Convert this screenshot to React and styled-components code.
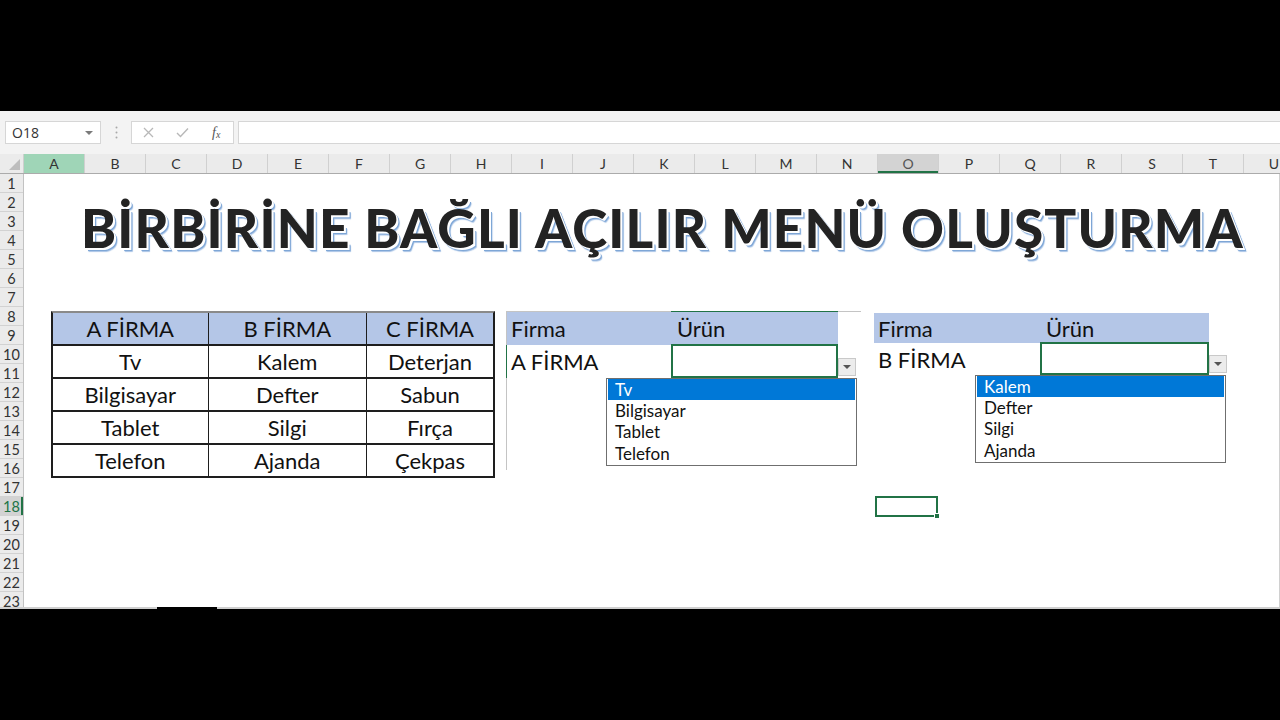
import React from "react";
import styled, { createGlobalStyle } from "styled-components";

const GlobalStyle = createGlobalStyle`
  html, body { margin: 0; padding: 0; background: #000; }
  body { font-family: "Lato", "Liberation Sans", sans-serif; }
  *, *::before, *::after { box-sizing: border-box; }
`;

const GREEN = "#217346";
const HEAD_BLUE = "#b4c6e7";

const Screen = styled.div`
  width: 1280px;
  height: 720px;
  background: #000;
  display: flex;
  flex-direction: column;
  overflow: hidden;
`;

const Letterbox = styled.div`
  flex: none;
  height: ${(p) => p.$h}px;
  background: #000;
`;

const ExcelWindow = styled.div`
  flex: none;
  height: 498px;
  background: #fff;
  display: flex;
  flex-direction: column;
  overflow: hidden;
`;

/* ---------- formula bar ---------- */
const FormulaBar = styled.div`
  flex: none;
  height: 43px;
  background: #f3f3f3;
  display: flex;
  align-items: flex-start;
  padding: 10px 0 0 5px;
`;

const NameBox = styled.div`
  width: 96px;
  height: 23px;
  background: #fff;
  border: 1px solid #d6d6d6;
  display: flex;
  align-items: center;
  justify-content: space-between;
  padding: 0 7px 0 6px;
  font-family: "Open Sans", "Liberation Sans", sans-serif;
  font-size: 14px;
  color: #333;
`;

const Caret = styled.span`
  width: 0;
  height: 0;
  border-left: 4px solid transparent;
  border-right: 4px solid transparent;
  border-top: 4px solid #7a7a7a;
`;

const Grip = styled.div`
  width: 30px;
  height: 23px;
  display: flex;
  align-items: center;
  justify-content: center;
`;

const FxBox = styled.div`
  width: 103px;
  height: 23px;
  background: #fff;
  border: 1px solid #d6d6d6;
  display: flex;
`;

const FxSlot = styled.div`
  width: 34px;
  height: 100%;
  display: flex;
  align-items: center;
  justify-content: center;
  color: #555;
  font-family: "Liberation Serif", serif;
  font-style: italic;
  font-size: 14px;
`;

const FormulaInput = styled.div`
  flex: 1;
  height: 23px;
  margin-left: 4px;
  background: #fff;
  border: 1px solid #d6d6d6;
  border-right: none;
`;

/* ---------- column headers ---------- */
const ColHeaderRow = styled.div`
  flex: none;
  height: 20px;
  display: flex;
  background: #ebebeb;
  border-bottom: 1px solid #ababab;
`;

const Corner = styled.div`
  flex: none;
  width: 24px;
  height: 100%;
  position: relative;
  border-right: 1px solid #cfcfcf;
  &::after {
    content: "";
    position: absolute;
    right: 3px;
    bottom: 3px;
    width: 0;
    height: 0;
    border-left: 11px solid transparent;
    border-bottom: 11px solid #bdbdbd;
  }
`;

const ColHead = styled.div`
  flex: none;
  width: 61px;
  height: 100%;
  display: flex;
  align-items: center;
  justify-content: center;
  font-size: 14px;
  color: ${(p) => (p.$state === "sel" ? "#555" : "#333")};
  border-right: 1px solid #d0d0d0;
  background: ${(p) =>
    p.$state === "green" ? "#9fd5b7" : p.$state === "sel" ? "#d3d3d3" : "transparent"};
  box-shadow: ${(p) => (p.$state === "sel" ? `inset 0 -2px 0 ${GREEN}` : "none")};
`;

/* ---------- body ---------- */
const Body = styled.div`
  flex: none;
  height: 433px;
  display: flex;
  overflow: hidden;
`;

const RowHeaders = styled.div`
  flex: none;
  width: 24px;
  display: flex;
  flex-direction: column;
  background: #ebebeb;
  border-right: 1px solid #c2c2c2;
`;

const RowLabel = styled.div`
  flex: none;
  height: 19px;
  display: flex;
  align-items: center;
  justify-content: center;
  font-size: 14.5px;
  color: ${(p) => (p.$active ? GREEN : "#333")};
  background: ${(p) => (p.$active ? "#d3d3d3" : "transparent")};
  border-bottom: 1px solid #d2d2d2;
  box-shadow: ${(p) => (p.$active ? `inset -2px 0 0 ${GREEN}` : "none")};
`;

const Sheet = styled.div`
  flex: 1;
  position: relative;
  display: flex;
  flex-direction: column;
  border-right: 1px solid #d0d0d0;
`;

const Title = styled.h1`
  margin: 27px 0 0 0;
  padding-left: 57px;
  font-family: "Lato", "Liberation Sans", sans-serif;
  font-weight: 900;
  font-size: 53px;
  line-height: 53px;
  letter-spacing: 1.2px;
  white-space: nowrap;
  color: #232323;
  text-shadow: 1px 1px 0 #fff, 2px 2px 0 #fff, 3px 3px 0 #7ea6d6, 3.5px 3.5px 1px #a9c4e6;
`;

const BlocksRow = styled.div`
  display: flex;
  align-items: flex-start;
  margin-top: 57px;
  padding-left: 27px;
`;

/* ---------- firm table ---------- */
const FirmTable = styled.div`
  display: grid;
  grid-template-columns: 154.5px 156.5px 126px;
  grid-template-rows: 31px repeat(4, 31.5px);
  gap: 1.5px;
  width: 444px;
  background: #1e1e1e;
  border: 2px solid #1e1e1e;
  border-top-color: #8a8a8a;
`;

const TCell = styled.div`
  display: flex;
  align-items: center;
  justify-content: center;
  background: ${(p) => (p.$head ? HEAD_BLUE : "#fff")};
  font-size: 22px;
  color: #111;
`;

/* ---------- lookup blocks ---------- */
const LookupBlock = styled.div`
  width: ${(p) => p.$w}px;
  height: ${(p) => p.$h}px;
  margin-left: ${(p) => p.$ml}px;
  margin-top: ${(p) => p.$mt}px;
  border-left: ${(p) => (p.$framed ? "1px solid #c4c4c4" : "none")};
  border-top: ${(p) => (p.$framed ? "1px solid #c4c4c4" : "none")};
`;

const LookupRow = styled.div`
  display: grid;
  grid-template-columns: ${(p) => p.$cols};
  height: ${(p) => p.$h}px;
  width: max-content;
  background: ${(p) => (p.$head ? HEAD_BLUE : "transparent")};
  box-shadow: ${(p) => (p.$mark ? `-1px 0 0 ${GREEN}` : "none")};
`;

const LCell = styled.div`
  display: flex;
  align-items: center;
  padding-left: ${(p) => p.$pl}px;
  font-size: 22px;
  color: #111;
  box-shadow: ${(p) => (p.$accent ? `0 -1px 0 ${GREEN}` : "none")};
`;

const InputCell = styled.div`
  position: relative;
  border: 2px solid ${GREEN};
  margin-top: -1px;
  height: calc(100% + 1px);
  background: #fff;
`;

const ArrowBtn = styled.div`
  position: absolute;
  left: calc(100% + 2px);
  bottom: 0;
  width: 18px;
  height: 18px;
  background: #ececec;
  border: 1px solid #c9c9c9;
  display: flex;
  align-items: center;
  justify-content: center;
  &::after {
    content: "";
    width: 0;
    height: 0;
    border-left: 4px solid transparent;
    border-right: 4px solid transparent;
    border-top: 4px solid #555;
  }
`;

const DropList = styled.div`
  position: absolute;
  top: calc(100% + 2px);
  left: -67px;
  width: 251px;
  background: #fff;
  border: 1px solid #6f6f6f;
  padding: 0 1px 1px 1px;
  z-index: 2;
`;

const DropItem = styled.div`
  height: 21.2px;
  line-height: 21.2px;
  padding-left: 7px;
  font-size: 17px;
  color: ${(p) => (p.$sel ? "#fff" : "#111")};
  background: ${(p) => (p.$sel ? "#0078d7" : "transparent")};
`;

const ActiveCell = styled.div`
  position: absolute;
  left: 851px;
  top: 322px;
  width: 63px;
  height: 21px;
  border: 2px solid ${GREEN};
  &::after {
    content: "";
    position: absolute;
    right: -4px;
    bottom: -4px;
    width: 6px;
    height: 6px;
    background: ${GREEN};
    border: 1px solid #fff;
  }
`;

const ScrollStrip = styled.div`
  flex: none;
  height: 2px;
  display: flex;
  background: #000;
`;

const ScrollSeg = styled.div`
  height: 2px;
  width: ${(p) => (p.$w ? `${p.$w}px` : "auto")};
  flex: ${(p) => (p.$w ? "none" : "1")};
  background: ${(p) => p.$c};
`;

const COLS = "ABCDEFGHIJKLMNOPQRSTU".split("");
const ROWS = Array.from({ length: 23 }, (_, i) => i + 1);

const table = [
  ["A FİRMA", "B FİRMA", "C FİRMA"],
  ["Tv", "Kalem", "Deterjan"],
  ["Bilgisayar", "Defter", "Sabun"],
  ["Tablet", "Silgi", "Fırça"],
  ["Telefon", "Ajanda", "Çekpas"],
];

function Lookup({ firm, items, w, h, ml, mt, framed, cols, headH, rowH }) {
  return (
    <LookupBlock $w={w} $h={h} $ml={ml} $mt={mt} $framed={framed}>
      <LookupRow $head $cols={cols} $h={headH}>
        <LCell $pl={4}>Firma</LCell>
        <LCell $pl={6} $accent={framed}>Ürün</LCell>
      </LookupRow>
      <LookupRow $cols={cols} $h={rowH} $mark={framed}>
        <LCell $pl={4}>{firm}</LCell>
        <InputCell>
          <ArrowBtn />
          <DropList>
            {items.map((it, i) => (
              <DropItem key={it} $sel={i === 0}>
                {it}
              </DropItem>
            ))}
          </DropList>
        </InputCell>
      </LookupRow>
    </LookupBlock>
  );
}

export default function App() {
  return (
    <>
      <GlobalStyle />
      <Screen>
        <Letterbox $h={111} />
        <ExcelWindow>
          <FormulaBar>
            <NameBox>
              O18
              <Caret />
            </NameBox>
            <Grip>
              <svg width="3" height="13" viewBox="0 0 3 13">
                <circle cx="1.5" cy="1.5" r="1" fill="#a8a8a8" />
                <circle cx="1.5" cy="6.5" r="1" fill="#a8a8a8" />
                <circle cx="1.5" cy="11.5" r="1" fill="#a8a8a8" />
              </svg>
            </Grip>
            <FxBox>
              <FxSlot>
                <svg width="11" height="11" viewBox="0 0 11 11">
                  <path d="M1 1 L10 10 M10 1 L1 10" stroke="#b8b8b8" strokeWidth="1.3" fill="none" />
                </svg>
              </FxSlot>
              <FxSlot>
                <svg width="13" height="11" viewBox="0 0 13 11">
                  <path d="M1 6 L4.5 9.5 L12 1.5" stroke="#b8b8b8" strokeWidth="1.4" fill="none" />
                </svg>
              </FxSlot>
              <FxSlot>
                f<span style={{ fontSize: "10px", marginTop: "4px" }}>x</span>
              </FxSlot>
            </FxBox>
            <FormulaInput />
          </FormulaBar>

          <ColHeaderRow>
            <Corner />
            {COLS.map((c) => (
              <ColHead key={c} $state={c === "A" ? "green" : c === "O" ? "sel" : ""}>
                {c}
              </ColHead>
            ))}
          </ColHeaderRow>

          <Body>
            <RowHeaders>
              {ROWS.map((r) => (
                <RowLabel key={r} $active={r === 18}>
                  {r}
                </RowLabel>
              ))}
            </RowHeaders>
            <Sheet>
              <Title>BİRBİRİNE BAĞLI AÇILIR MENÜ OLUŞTURMA</Title>
              <BlocksRow>
                <FirmTable>
                  {table.map((row, ri) =>
                    row.map((txt, ci) => (
                      <TCell key={`${ri}-${ci}`} $head={ri === 0}>
                        {txt}
                      </TCell>
                    ))
                  )}
                </FirmTable>
                <Lookup
                  firm="A FİRMA"
                  items={["Tv", "Bilgisayar", "Tablet", "Telefon"]}
                  w={355}
                  h={159}
                  ml={11}
                  mt={0}
                  framed
                  cols="164px 167px"
                  headH={33}
                  rowH={33}
                />
                <Lookup
                  firm="B FİRMA"
                  items={["Kalem", "Defter", "Silgi", "Ajanda"]}
                  w={352}
                  h={160}
                  ml={13}
                  mt={2}
                  framed={false}
                  cols="166px 169px"
                  headH={30}
                  rowH={32}
                />
              </BlocksRow>
              <ActiveCell />
            </Sheet>
          </Body>
          <ScrollStrip>
            <ScrollSeg $w={157} $c="#cfcfcf" />
            <ScrollSeg $w={60} $c="#000" />
            <ScrollSeg $c="#cfcfcf" />
          </ScrollStrip>
        </ExcelWindow>
        <Letterbox $h={111} />
      </Screen>
    </>
  );
}
